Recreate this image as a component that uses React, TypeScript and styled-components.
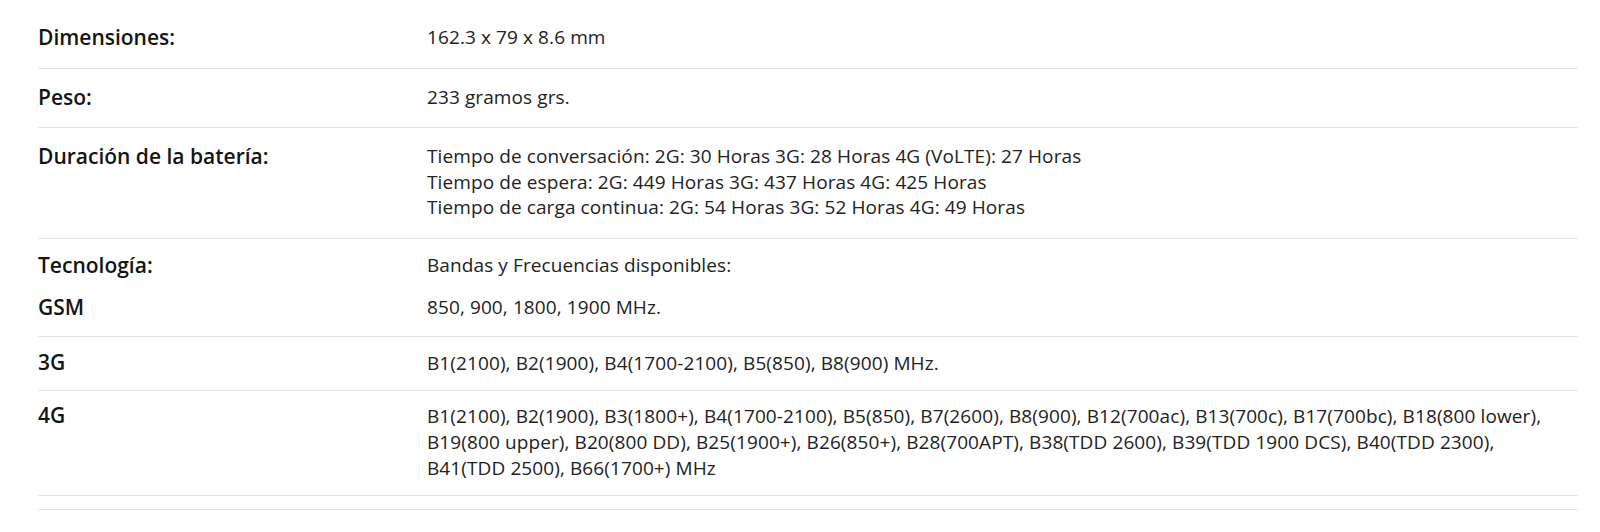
import React from "react";
import styled, { createGlobalStyle } from "styled-components";

const GlobalStyle = createGlobalStyle`
  html, body {
    margin: 0;
    padding: 0;
    background: #ffffff;
  }
  body {
    margin: 8px;
    font-family: "Open Sans", "Liberation Sans", sans-serif;
    color: #1f1f1f;
  }
`;

const Wrapper = styled.div`
  padding: 1px 14px 0 30px;
`;

const Table = styled.div`
  display: flex;
  flex-direction: column;
`;

const Row = styled.div<{ $pt?: number; $pb?: number }>`
  display: grid;
  grid-template-columns: 389px 1fr;
  padding: ${(p) => p.$pt ?? 16}px 0 ${(p) => p.$pb ?? 17}px;
  border-bottom: 1px solid #e1e5ea;
`;

const SubRows = styled.div`
  grid-column: 1 / span 2;
  display: flex;
  flex-direction: column;
  gap: 16px;
`;

const SubRow = styled.div`
  display: grid;
  grid-template-columns: 389px 1fr;
`;

const Label = styled.div`
  font-family: "Open Sans", "Liberation Sans", sans-serif;
  font-weight: 600;
  font-size: 21px;
  line-height: 25.6px;
  color: #141414;
`;

const Value = styled.div<{ $lh?: number }>`
  font-family: "Open Sans", "Liberation Sans", sans-serif;
  font-size: 19px;
  line-height: ${(p) => p.$lh ?? 25.6}px;
  color: #222222;
  letter-spacing: 0.1px;
  display: flex;
  flex-direction: column;
`;

const Line = styled.span`
  white-space: nowrap;
`;

const EmptyRow = styled.div`
  height: 13px;
  border-bottom: 1px solid #e1e5ea;
`;

type Spec = { label: string; lines: string[]; pt?: number; pb?: number; lh?: number };

const specs: Spec[] = [
  { label: "Dimensiones:", lines: ["162.3 x 79 x 8.6 mm"] },
  { label: "Peso:", lines: ["233 gramos grs."] },
  {
    label: "Duración de la batería:",
    lines: [
      "Tiempo de conversación: 2G: 30 Horas 3G: 28 Horas 4G (VoLTE): 27 Horas",
      "Tiempo de espera: 2G: 449 Horas 3G: 437 Horas 4G: 425 Horas",
      "Tiempo de carga continua: 2G: 54 Horas 3G: 52 Horas 4G: 49 Horas",
    ],
  },
];

const bands: Spec[] = [
  {
    label: "3G",
    lines: ["B1(2100), B2(1900), B4(1700-2100), B5(850), B8(900) MHz."],
    pt: 13,
    pb: 14,
    lh: 26,
  },
  {
    label: "4G",
    lines: [
      "B1(2100), B2(1900), B3(1800+), B4(1700-2100), B5(850), B7(2600), B8(900), B12(700ac), B13(700c), B17(700bc), B18(800 lower),",
      "B19(800 upper), B20(800 DD), B25(1900+), B26(850+), B28(700APT), B38(TDD 2600), B39(TDD 1900 DCS), B40(TDD 2300),",
      "B41(TDD 2500), B66(1700+) MHz",
    ],
    pt: 12,
    pb: 14,
    lh: 26,
  },
];

const SpecRow = ({ spec }: { spec: Spec }) => (
  <Row $pt={spec.pt} $pb={spec.pb}>
    <Label>{spec.label}</Label>
    <Value $lh={spec.lh}>
      {spec.lines.map((l, i) => (
        <Line key={i}>{l}</Line>
      ))}
    </Value>
  </Row>
);

export default function App() {
  return (
    <>
      <GlobalStyle />
      <Wrapper>
        <Table>
          {specs.map((s) => (
            <SpecRow key={s.label} spec={s} />
          ))}
          <Row $pt={14} $pb={16}>
            <SubRows>
              <SubRow>
                <Label>Tecnología:</Label>
                <Value>
                  <Line>Bandas y Frecuencias disponibles:</Line>
                </Value>
              </SubRow>
              <SubRow>
                <Label>GSM</Label>
                <Value>
                  <Line>850, 900, 1800, 1900 MHz.</Line>
                </Value>
              </SubRow>
            </SubRows>
          </Row>
          {bands.map((s) => (
            <SpecRow key={s.label} spec={s} />
          ))}
          <EmptyRow />
        </Table>
      </Wrapper>
    </>
  );
}
